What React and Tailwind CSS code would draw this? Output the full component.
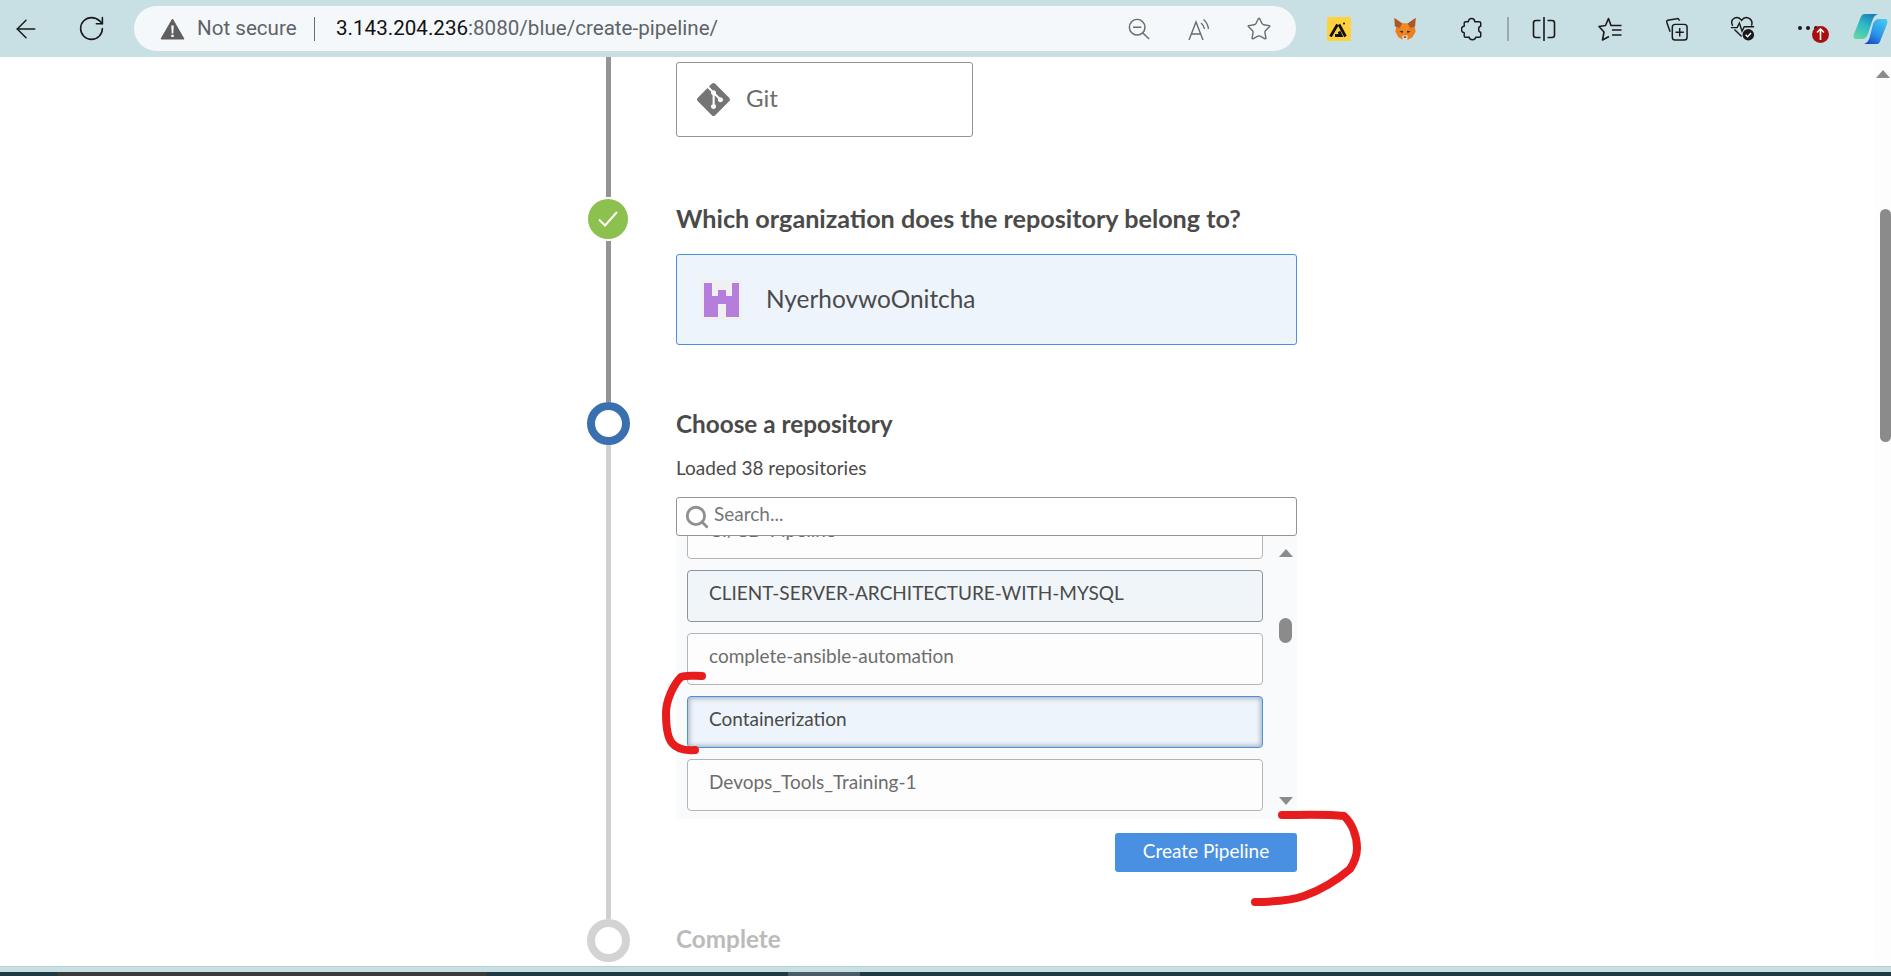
import { ArrowLeft, RotateCw, Star, Search } from "lucide-react"
import { SiGit } from "react-icons/si"

const lato = { fontFamily: "Lato, sans-serif" }

const ZoomOutIcon = () => (
  <svg width="22" height="22" viewBox="0 0 24 24" fill="none" stroke="#6b6b6b" strokeWidth="1.6">
    <circle cx="10" cy="10" r="8.5" />
    <path d="M5.500 10h9M16 16l7 7" />
  </svg>
)

const ReadAloudIcon = () => (
  <svg width="24" height="24" viewBox="0 0 24 24" fill="none" stroke="#6b6b6b" strokeWidth="1.4">
    <path d="M1 23 8 5l7 18M3.500 17h9" />
    <path d="M13 6c2 1.500 3 3.500 3.500 6M15.500 2.500c3 2.500 4.500 5.500 5 9.500" />
  </svg>
)

const NotSecureIcon = () => (
  <svg width="25" height="22" viewBox="0 0 25 22">
    <path d="M12.500 1 24 21H1z" fill="#5f5f5f" stroke="#5f5f5f" strokeLinejoin="round" />
    <path d="M11.300 7.500h2.400l-.4 8h-1.600zM11.300 16.800h2.400v2.200h-2.400z" fill="#fff" />
  </svg>
)

const YellowExt = () => (
  <svg width="24" height="24" viewBox="0 0 24 24">
    <rect width="24" height="24" rx="1.500" fill="#fdd23e" />
    <path d="M3.500 19.500 10.500 7.500M12 7.500l6.500 12M8 18.500h6l-2-4" fill="none" stroke="#111" strokeWidth="2.800" />
    <circle cx="17" cy="6.500" r="1" fill="#111" />
  </svg>
)

const FoxIcon = () => (
  <svg width="24" height="24" viewBox="0 0 26 26">
    <path d="M1.500 1 10 7h6l8.500-6-1 9 1 6-3.500 6-5 3h-5l-5-3-3.500-6 1-6z" fill="#ef7f1a" />
    <path d="M1.500 1 10 7 7 12 2 10zM24.500 1 16 7l3 5 5-2z" fill="#a85a26" />
    <path d="M10 7h6l1.500 7-2.500 3h-4l-2.500-3z" fill="#f08a24" />
    <path d="M7 15.500 11 15l-.8 2.500zM19 15.500 15 15l.8 2.500z" fill="#233447" />
    <path d="M10 20h6l-.5 5h-5z" fill="#e4dccf" />
    <path d="M11.500 21h3l-.5 1.500h-2z" fill="#3c2b20" />
  </svg>
)

const PuzzleIcon = () => (
  <svg width="22" height="24" viewBox="0 0 24 26" fill="none" stroke="#1a1a1a" strokeWidth="1.6" strokeLinejoin="round">
    <path d="M8 5c0-4.500 7-4.500 7 0h5c1 0 1.500.5 1.500 1.500V10c-3 0-3 6.500 0 6.500v4c0 1-.5 1.500-1.500 1.500h-4c0 3.500-7 3.500-7 0H5c-1 0-1.500-.5-1.500-1.500V17C-.5 17-.5 10 3.500 10V6.500C3.500 5.500 4 5 5 5z" />
  </svg>
)

const SplitIcon = () => (
  <svg width="24" height="26" viewBox="0 0 24 26" fill="none" stroke="#1a1a1a" strokeWidth="1.6">
    <path d="M8.500 4.500H4C2.500 4.500 1.500 5.500 1.500 7v12c0 1.500 1 2.500 2.500 2.500h4.500M15.500 4.500H20c1.500 0 2.500 1 2.500 2.500v12c0 1.500-1 2.500-2.500 2.500h-4.500M12 1v24" />
  </svg>
)

const FavoritesIcon = () => (
  <svg width="24" height="24" viewBox="0 0 24 24" fill="none" stroke="#1a1a1a" strokeWidth="1.6" strokeLinejoin="round">
    <path d="M15 8.500h-2L10.500 1.500 7.500 8.500 1 9.500l5 5.500-1.500 8 6.500-3.500" />
    <path d="M15 8.500h8.500M14 13h9.500M14 18h9.500" />
  </svg>
)

const CollectionsIcon = () => (
  <svg width="24" height="24" viewBox="0 0 26 26" fill="none" stroke="#1a1a1a" strokeWidth="1.6" strokeLinejoin="round">
    <path d="M17 4 16 2.500c-.5-.8-1.500-1-2.200-.6L4 3.500c-1 .5-1.300 1.500-.9 2.400l3.500 10" />
    <rect x="9" y="8" width="16" height="17" rx="3" />
    <path d="M17 12v9M12.500 16.500h9" />
  </svg>
)

const HealthIcon = () => (
  <svg width="25" height="25" viewBox="0 0 28 28" fill="none">
    <path d="M13 23 5 15M3 11C1 7 2 4 5 2.500 8 1 11 2 13 5c2-3 5-4 8-2.500 3 1.500 4.500 4.500 3 8.500" stroke="#1a1a1a" strokeWidth="1.600" />
    <path d="M1 13h7l2.500-5 3 9 2.500-5h11" stroke="#1a1a1a" strokeWidth="1.600" />
    <circle cx="20.500" cy="21" r="6.500" fill="#1a1a1a" />
    <path d="m17.500 21 2.200 2.200 3.800-4.200" stroke="#fff" strokeWidth="1.500" />
  </svg>
)

const CopilotIcon = () => (
  <svg width="35" height="32" viewBox="0 0 35 32">
    <defs>
      <linearGradient id="copA" x1="0.7" y1="0" x2="0.2" y2="1">
        <stop offset="0" stopColor="#1c7fb8" />
        <stop offset="0.45" stopColor="#2fb8c8" />
        <stop offset="1" stopColor="#62d8a0" />
      </linearGradient>
      <linearGradient id="copB" x1="0.8" y1="0" x2="0.2" y2="1">
        <stop offset="0" stopColor="#45c6f2" />
        <stop offset="0.6" stopColor="#2a8fe8" />
        <stop offset="1" stopColor="#1a48c8" />
      </linearGradient>
    </defs>
    <path d="M12 1H25C22 2 20.500 4 19.500 7L15 21C14 24 12 26 9 26H3C1 26 0 24 1 21L7 6C8 3 9 1 12 1z" fill="url(#copA)" />
    <path d="M24 31H11C14 30 15.500 28 16.500 25L20 11C21 8 23 6 26 6H32C34 6 35 8 34 11L28 26C27 29 26 31 24 31z" fill="url(#copB)" />
  </svg>
)

function TopBar() {
  return (
    <div className="h-[57px] bg-[#c8dfe3] flex items-center shrink-0">
      <ArrowLeft size={30} strokeWidth={1.2} color="#1a1a1a" className="ml-[11px]" />
      <RotateCw size={29} strokeWidth={1.3} color="#1a1a1a" className="ml-[36px]" />
      <div className="ml-[28px] w-[1162px] h-[45px] rounded-full bg-[#f5f8fa] flex items-center pl-[26px] text-[20.6px]" style={{ fontFamily: "Roboto, sans-serif" }}>
        <NotSecureIcon />
        <span className="ml-[12px] text-[#5f6368] w-[100px] whitespace-nowrap">Not secure</span>
        <span className="ml-[17px] w-px h-[24px] bg-[#6b6b6b]" />
        <span className="ml-[21px] text-[#111]">3.143.204.236</span>
        <span className="text-[#5f6368]">:8080/blue/create-pipeline/</span>
        <div className="ml-auto mr-[24px] flex items-center">
          <ZoomOutIcon />
          <div className="ml-[38px]"><ReadAloudIcon /></div>
          <Star size={26} strokeWidth={1.3} color="#6b6b6b" className="ml-[34px]" />
        </div>
      </div>
      <div className="ml-[31px] flex items-center">
        <YellowExt />
        <div className="ml-[42px]"><FoxIcon /></div>
        <div className="ml-[44px]"><PuzzleIcon /></div>
        <span className="ml-[24px] w-[2px] h-[24px] bg-[#9aa9ad]" />
        <div className="ml-[23px]"><SplitIcon /></div>
        <div className="ml-[42px]"><FavoritesIcon /></div>
        <div className="ml-[42px]"><CollectionsIcon /></div>
        <div className="ml-[42px]"><HealthIcon /></div>
        <div className="ml-[43px] relative flex gap-[4px] items-center w-[20px] -mt-[2px]">
          <span className="w-[4px] h-[4px] shrink-0 bg-[#1a1a1a] rounded-full" />
          <span className="w-[4px] h-[4px] shrink-0 bg-[#1a1a1a] rounded-full" />
          <span className="w-[4px] h-[4px] shrink-0 bg-[#1a1a1a] rounded-full" />
          <span className="absolute left-[14px] top-[0px] w-[17px] h-[17px] rounded-full bg-[#a81010] flex items-center justify-center">
            <svg width="9" height="12" viewBox="0 0 9 12" fill="none" stroke="#fff" strokeWidth="1.6">
              <path d="M4.500 12V1M1 4.500l3.500-3.500L8 4.500" />
            </svg>
          </span>
        </div>
        <div className="ml-[35px]"><CopilotIcon /></div>
      </div>
    </div>
  )
}

function RepoItem({ name, variant }) {
  const styles = {
    plain: "border-[#b5b5b5] bg-[#fdfdfd] text-[#6d6d6d]",
    hover: "border-[#8f9396] bg-[#f0f5f9] text-[#4a4a4a]",
    selected: "border-[#4a90e2] bg-[#edf4fc] text-[#4a4a4a] shadow-[inset_0_0_4px_2px_#b4bac2]",
  }
  return (
    <div className={`h-[52px] shrink-0 rounded-[4px] border pl-[21px] pb-[6px] flex items-center text-[19px] ${styles[variant]}`}>
      {name}
    </div>
  )
}

function RepoList() {
  return (
    <div className="h-[283px] bg-[#f9fafb] flex overflow-hidden">
      <div className="w-[587px] pl-[11px] -mt-[29px] flex flex-col gap-[11px]">
        <RepoItem name="CI/CD-Pipeline" variant="plain" />
        <RepoItem name="CLIENT-SERVER-ARCHITECTURE-WITH-MYSQL" variant="hover" />
        <RepoItem name="complete-ansible-automation" variant="plain" />
        <RepoItem name="Containerization" variant="selected" />
        <RepoItem name="Devops_Tools_Training-1" variant="plain" />
      </div>
      <div className="ml-[15px] w-[15px] flex flex-col items-center pt-[13px]">
        <span className="w-0 h-0 border-x-[7.5px] border-x-transparent border-b-[8px] border-b-[#8b8b8b]" />
        <span className="mt-[61px] w-[13px] h-[25px] rounded-full bg-[#8b8b8b]" />
        <span className="mt-[154px] w-0 h-0 border-x-[7.5px] border-x-transparent border-t-[8px] border-t-[#8b8b8b]" />
      </div>
    </div>
  )
}

function Steps() {
  return (
    <div className="ml-[586px] w-[711px] text-[#4a4a4a]" style={lato}>
      <div className="h-[140px] flex">
        <div className="w-[44px] flex justify-center">
          <span className="w-[5px] bg-[#949494]" />
        </div>
        <div className="ml-[46px] pt-[5px]">
          <div className="w-[297px] h-[75px] border border-[#949494] rounded-[3px] flex items-center pl-[20px] text-[#6d6d6d] text-[24px]">
            <SiGit size={33} color="#757575" />
            <span className="ml-[16px] pb-[4px]">Git</span>
          </div>
        </div>
      </div>

      <div className="h-[205px] flex">
        <div className="w-[44px] flex flex-col items-center">
          <span className="mt-[2px] w-[40px] h-[40px] rounded-full bg-[#8cc04f] flex items-center justify-center shrink-0">
            <svg width="22" height="18" viewBox="0 0 22 18" fill="none" stroke="#fff" strokeWidth="2">
              <path d="M2 9.500 8 15.500 20 2" />
            </svg>
          </span>
          <span className="mt-[2px] w-[5px] flex-1 bg-[#949494]" />
        </div>
        <div className="ml-[46px] pt-[6px] w-[621px]">
          <h2 className="text-[25.2px] leading-[30px] font-bold whitespace-nowrap">Which organization does the repository belong to?</h2>
          <div className="mt-[21px] h-[91px] border border-[#4a90e2] rounded-[3px] bg-[#edf4fc] flex items-center pl-[24px] text-[24.4px]">
            <svg width="41" height="40" viewBox="0 0 41 40" className="shrink-0">
              <rect width="41" height="40" fill="#f0f0f0" />
              <path d="M3 3h8v13h6V10h8v6h6V3h7v34H25V24h-8v13H3z" fill="#b57edc" />
            </svg>
            <span className="ml-[24px]">NyerhovwoOnitcha</span>
          </div>
        </div>
      </div>

      <div className="h-[517px] flex">
        <div className="w-[44px] flex flex-col items-center">
          <span className="w-[43px] h-[43px] rounded-full border-[8px] border-[#3b70b0] shrink-0" />
          <span className="w-[5px] flex-1 bg-[#d0d0d0]" />
        </div>
        <div className="ml-[46px] pt-[7px] w-[621px]">
          <h2 className="text-[24.3px] leading-[30px] font-bold">Choose a repository</h2>
          <p className="mt-[17px] text-[19px] leading-[24px]">Loaded 38 repositories</p>
          <div className="mt-[17px] h-[39px] border border-[#949494] rounded-[3px] bg-white flex items-center pl-[7px] relative z-10">
            <Search size={26} strokeWidth={2.6} color="#8f8f8f" className="shrink-0" />
            <span className="ml-[4px] pb-[4px] text-[19px] text-[#757575]">Search...</span>
          </div>
          <RepoList />
          <div className="mt-[14px] flex justify-end">
            <button className="w-[182px] h-[39px] rounded-[3px] bg-[#4a90e2] text-white text-[19px] pb-[2px]">Create Pipeline</button>
          </div>
        </div>
      </div>

      <div className="flex">
        <div className="w-[44px] flex justify-center">
          <span className="w-[43px] h-[43px] rounded-full border-[8px] border-[#d3d3d3] shrink-0" />
        </div>
        <h2 className="ml-[46px] pt-[5px] text-[24.3px] leading-[30px] font-bold text-[#bbbbbb]">Complete</h2>
      </div>
    </div>
  )
}

// the two red marks drawn over the screenshot
function RedMarks() {
  return (
    <svg className="absolute left-0 top-0 pointer-events-none z-20" width="1891" height="976" fill="none" stroke="#e81c1c" strokeWidth="8" strokeLinecap="round" strokeLinejoin="round">
      <path d="M702 676c-8 0-17-1-21 1-8 8-15 24-15 36 0 12 1 24 6 30 5 6 12 8 23 7" />
      <path d="M1282 815c20 0 45-1 62 1 8 7 13 20 13 32 0 8-3 15-7 21-14 12-32 22-46 27-15 5-30 6-49 6" />
    </svg>
  )
}

export default function App() {
  return (
    <div className="relative w-[1891px] h-[976px] overflow-hidden flex flex-col bg-white">
      <TopBar />
      <div className="relative flex-1 overflow-hidden">
        <Steps />
        <div className="absolute right-0 top-0 bottom-0 w-[16px] bg-[#fdfdfd] flex flex-col items-end">
          <span className="mt-[13px] mr-[1px] w-0 h-0 border-x-[7px] border-x-transparent border-b-[8px] border-b-[#8b8b8b]" />
          <span className="mt-[131px] w-[11px] h-[233px] rounded-full bg-[#8b8b8b]" />
        </div>
      </div>
      <div className="h-[6px] bg-[#c8dfe3] border-t border-[#b6d0d4] shrink-0" />
      <div className="h-[4px] bg-[#1f3a44] flex shrink-0">
        <span className="ml-[57px] w-[430px] bg-[#3a3a3a]" />
        <span className="ml-[301px] w-[72px] bg-[#4a5d66]" />
      </div>
      <RedMarks />
    </div>
  )
}
